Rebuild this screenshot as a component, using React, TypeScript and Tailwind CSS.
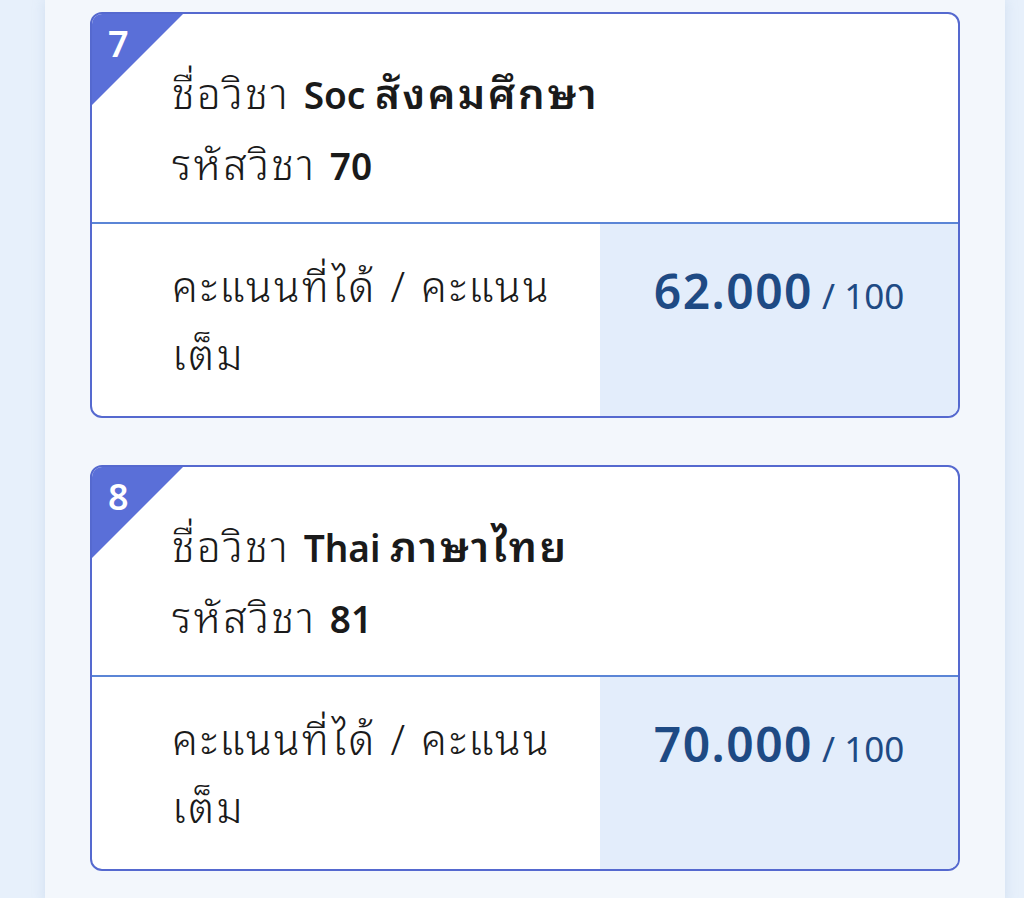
import React from "react";

type Subject = {
  no: number;
  code: string;
  nameEn: string;
  nameTh: string;
  score: string;
  full: number;
};

const subjects: Subject[] = [
  { no: 7, code: "70", nameEn: "Soc", nameTh: "สังคมศึกษา", score: "62.000", full: 100 },
  { no: 8, code: "81", nameEn: "Thai", nameTh: "ภาษาไทย", score: "70.000", full: 100 },
];

const font = {
  fontFamily: '"Noto Sans", "Noto Sans Thai Looped", "Noto Sans Thai", "Open Sans", sans-serif',
};

// Thai runs are set a little larger and looser than the latin ones
const th = "text-[42px] leading-none tracking-[0.06em]";
const en = "text-[37px] leading-none tracking-normal";

const SubjectCard: React.FC<{ s: Subject }> = ({ s }) => (
  <div className="relative overflow-hidden rounded-xl border-2 border-[#5569cf] bg-white">
    <div className="absolute left-0 top-0 h-[91px] w-[91px] bg-[#5a6fd8] [clip-path:polygon(0_0,100%_0,0_100%)]" />
    <div className="absolute left-[16px] top-[6px] text-[36px] font-semibold leading-[48px] text-white">
      {s.no}
    </div>

    <div className="border-b-2 border-[#5b85d6] pb-[23px] pl-[80px] pr-6 pt-[43px] text-[42px] font-light leading-[71px] text-[#1a1a1a]">
      <div>
        <span className={th}>ชื่อวิชา </span>
        <span className="font-semibold">
          <span className={en}>{s.nameEn} </span>
          <span className={th}>{s.nameTh}</span>
        </span>
      </div>
      <div>
        <span className={th}>รหัสวิชา </span>
        <span className={`font-semibold ${en}`}>{s.code}</span>
      </div>
    </div>

    <div className="grid grid-cols-[508px_1fr]">
      <div className="pb-[28px] pl-[80px] pr-[30px] pt-[28px] text-[42px] font-light leading-[68px] tracking-[0.06em] text-[#1a1a1a]">
        คะแนนที่ได้ / คะแนนเต็ม
      </div>
      <div className="bg-[#e3edfb] pt-[35px] text-center text-[42px] leading-[68px] text-[#1e4a84]">
        <span className="text-[48px] leading-none font-semibold tracking-[0.03em]">{s.score}</span>
        <span className="text-[35px] leading-none"> / {s.full}</span>
      </div>
    </div>
  </div>
);

export default function App() {
  return (
    <div className="min-h-screen bg-[#e7f0fb]" style={font}>
      <div className="ml-[45px] mr-[19px] flex min-h-screen flex-col gap-[47px] bg-[#f3f7fc] px-[45px] pb-8 pt-3 shadow-[0_0_12px_rgba(140,170,210,0.25)]">
        {subjects.map((s) => (
          <SubjectCard key={s.no} s={s} />
        ))}
      </div>
    </div>
  );
}
